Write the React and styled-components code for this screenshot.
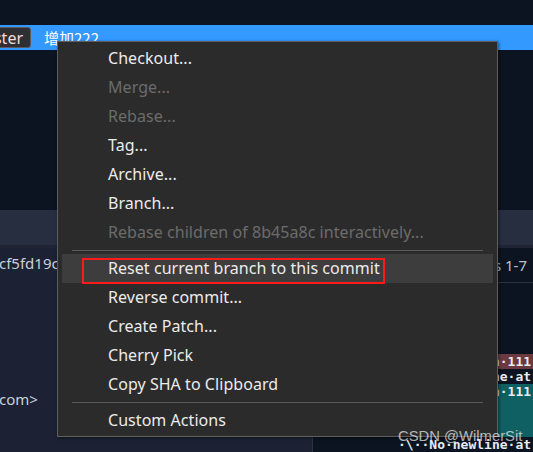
import styled, { createGlobalStyle } from 'styled-components';

const GlobalStyle = createGlobalStyle`
	html, body {
		margin: 0;
		padding: 0;
		background: #0d1421;
	}
	body {
		font-family: 'Noto Sans', 'Noto Sans CJK SC', sans-serif;
	}
`;

const menuItems = [
	{ label: 'Checkout...' },
	{ label: 'Merge...', disabled: true },
	{ label: 'Rebase...', disabled: true },
	{ label: 'Tag...' },
	{ label: 'Archive...' },
	{ label: 'Branch...' },
	{ label: 'Rebase children of 8b45a8c interactively...', disabled: true },
	{ separator: true },
	{ label: 'Reset current branch to this commit', active: true, marked: true },
	{ label: 'Reverse commit...' },
	{ label: 'Create Patch...' },
	{ label: 'Cherry Pick' },
	{ label: 'Copy SHA to Clipboard' },
	{ separator: true },
	{ label: 'Custom Actions' },
];

const App = () => {
	return (
		<>
			<GlobalStyle />
			<Screen>
				<TopGap />
				<SelectedRow>
					<BranchPill>master</BranchPill>
					<CommitMsg>增加222</CommitMsg>
				</SelectedRow>
				<GraphArea />
				<HeaderBand />
				<Details>
					<CommitInfo>
						<InfoLine top={5}>cf5fd19c0a8e</InfoLine>
						<InfoLine top={116}>com&gt;</InfoLine>
					</CommitInfo>
					<DiffPanel>
						<HunkRow>Hunk 1 : Lines 1-7</HunkRow>
						<DiffSpacer />
						<DiffLine kind='removed'>-Line·version·111</DiffLine>
						<DiffLine>·\··No·newline·at</DiffLine>
						<DiffLine kind='added'>+Line·version·111</DiffLine>
						<AddedFill />
						<DiffLine>·\··No·newline·at</DiffLine>
					</DiffPanel>
				</Details>

				<ContextMenu>
					{menuItems.map((item, i) =>
						item.separator ? (
							<Separator key={i} />
						) : (
							<MenuItem key={i} disabled={item.disabled} active={item.active}>
								{item.label}
								{item.marked && <Marker />}
							</MenuItem>
						)
					)}
				</ContextMenu>

				<Watermark>CSDN @WilmerSit</Watermark>
			</Screen>
		</>
	);
};

const Screen = styled.div`
	position: relative;
	width: 533px;
	height: 452px;
	overflow: hidden;
	display: flex;
	flex-direction: column;
	background: #0d1421;
`;

const TopGap = styled.div`
	height: 25px;
	flex: none;
`;

const SelectedRow = styled.div`
	height: 25px;
	flex: none;
	background: #3399ff;
	display: flex;
	align-items: center;
	gap: 13px;
`;

const BranchPill = styled.span`
	margin-left: -35px;
	height: 19px;
	padding: 0 7px 0 4px;
	display: flex;
	align-items: center;
	background: #2f2f33;
	border: 1px solid #5a5a5f;
	border-radius: 3px;
	color: #f3dcdc;
	font-size: 16px;
	line-height: 1;
`;

const CommitMsg = styled.span`
	color: #ffffff;
	font-size: 15px;
	font-family: 'Noto Sans CJK SC', sans-serif;
	line-height: 1;
`;

const GraphArea = styled.div`
	height: 160px;
	flex: none;
`;

const HeaderBand = styled.div`
	height: 35px;
	flex: none;
	background: #272e3f;
	border-bottom: 3px solid #1f2535;
`;

const Details = styled.div`
	flex: 1;
	display: flex;
	min-height: 0;
`;

const CommitInfo = styled.div`
	width: 312px;
	flex: none;
	background: #1c2233;
	border-right: 1px solid #2c3344;
	display: flex;
	flex-direction: column;
	overflow: hidden;
`;

const InfoLine = styled.div`
	margin-top: ${props => props.top}px;
	margin-left: -1px;
	height: 20px;
	line-height: 20px;
	color: #c9d0dc;
	font-size: 15px;
	white-space: nowrap;
`;

const DiffPanel = styled.div`
	flex: 1;
	display: flex;
	flex-direction: column;
	background: #0d1421;
	overflow: hidden;
`;

const HunkRow = styled.div`
	height: 34px;
	flex: none;
	display: flex;
	align-items: center;
	justify-content: flex-end;
	padding-right: 6px;
	border-bottom: 1px solid #2a3242;
	color: #b8c0cc;
	font-size: 15px;
	white-space: nowrap;
`;

const DiffSpacer = styled.div`
	height: 71px;
	flex: none;
`;

const DiffLine = styled.div`
	height: 15px;
	flex: none;
	padding-left: 85px;
	display: flex;
	align-items: center;
	font-family: 'DejaVu Sans Mono', monospace;
	font-weight: bold;
	font-size: 13px;
	white-space: nowrap;
	color: #e6ecf2;
	background: ${props =>
		props.kind === 'removed'
			? '#6b3a40'
			: props.kind === 'added'
			? '#0f6063'
			: '#0d1421'};
`;

const AddedFill = styled.div`
	height: 38px;
	flex: none;
	background: #0f6063;
`;

const ContextMenu = styled.div`
	position: absolute;
	left: 57px;
	top: 41px;
	width: 439px;
	padding: 2px 0 1px;
	background: #2b2b2b;
	border: 1px solid #5e5e5e;
	box-shadow: 1px 1px 3px rgba(0, 0, 0, 0.5);
`;

const MenuItem = styled.div`
	position: relative;
	height: 29px;
	margin: 0 4px;
	padding-left: 46px;
	padding-bottom: 2px;
	box-sizing: border-box;
	display: flex;
	align-items: center;
	font-size: 16px;
	letter-spacing: 0.05px;
	white-space: nowrap;
	color: ${props => (props.disabled ? '#6c6c6c' : '#ececec')};
	background: ${props => (props.active ? '#3d3d3d' : 'transparent')};
`;

const Marker = styled.span`
	position: absolute;
	left: 20px;
	top: 4px;
	width: 299px;
	height: 22px;
	border: 2px solid #ff1a1a;
`;

const Separator = styled.div`
	height: 1px;
	margin: 3px 14px 3px;
	background: #5a5a5a;
`;

const Watermark = styled.div`
	position: absolute;
	left: 398px;
	top: 428px;
	color: rgba(230, 230, 230, 0.75);
	font-family: 'Liberation Sans', sans-serif;
	font-size: 14.8px;
	white-space: nowrap;
`;

export default App;
